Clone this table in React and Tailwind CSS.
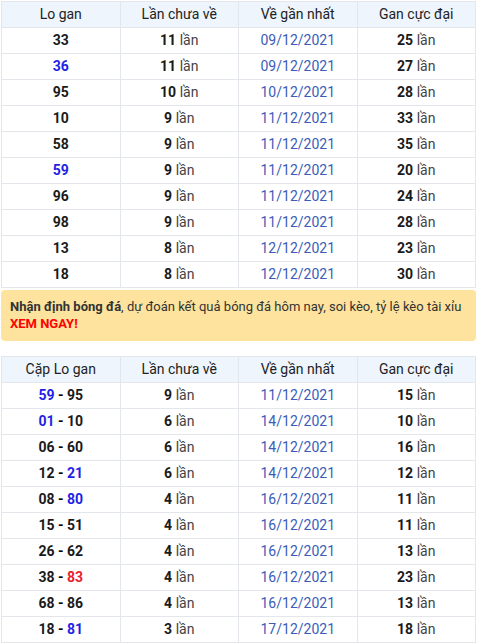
const rows1 = [
  ["33", null, 11, "09/12/2021", 25],
  ["36", "blue", 11, "09/12/2021", 27],
  ["95", null, 10, "10/12/2021", 28],
  ["10", null, 9, "11/12/2021", 33],
  ["58", null, 9, "11/12/2021", 35],
  ["59", "blue", 9, "11/12/2021", 20],
  ["96", null, 9, "11/12/2021", 24],
  ["98", null, 9, "11/12/2021", 28],
  ["13", null, 8, "12/12/2021", 23],
  ["18", null, 8, "12/12/2021", 30],
];

// [left, leftColor, right, rightColor, lan, date, max]
const rows2 = [
  ["59", "blue", "95", null, 9, "11/12/2021", 15],
  ["01", "blue", "10", null, 6, "14/12/2021", 10],
  ["06", null, "60", null, 6, "14/12/2021", 16],
  ["12", null, "21", "blue", 6, "14/12/2021", 12],
  ["08", null, "80", "blue", 4, "16/12/2021", 11],
  ["15", null, "51", null, 4, "16/12/2021", 11],
  ["26", null, "62", null, 4, "16/12/2021", 13],
  ["38", null, "83", "red", 4, "16/12/2021", 23],
  ["68", null, "86", null, 4, "16/12/2021", 13],
  ["18", null, "81", "blue", 3, "17/12/2021", 18],
];

const colorCls = {
  blue: "text-[#1f1fe6]",
  red: "text-[#e8212b]",
};

function Num({ v, c }) {
  return <span className={c ? colorCls[c] : "text-[#1a1a1a]"}>{v}</span>;
}

function Lan({ n }) {
  return (
    <>
      <b className="font-bold text-[#1a1a1a]">{n}</b>{" "}
      <span className="text-[#444]">lần</span>
    </>
  );
}

function Head({ cols }) {
  return (
    <thead>
      <tr className="bg-[#eef5fd]">
        {cols.map((c) => (
          <th key={c} className="h-[26px] p-0 border border-[#e3e6ea] font-normal text-[#222] w-1/4">
            {c}
          </th>
        ))}
      </tr>
    </thead>
  );
}

const td = "h-[26px] p-0 border border-[#e3e6ea] text-center";

export default function App() {
  return (
    <div className="w-[480px] pl-px pt-px text-[14px] bg-white" style={{ fontFamily: "Roboto, 'Liberation Sans', sans-serif" }}>
      <table className="w-[475px] border-collapse table-fixed">
        <Head cols={["Lo gan", "Lần chưa về", "Về gần nhất", "Gan cực đại"]} />
        <tbody>
          {rows1.map(([num, c, lan, date, max]) => (
            <tr key={num + date}>
              <td className={td + " font-bold"}><Num v={num} c={c} /></td>
              <td className={td}><Lan n={lan} /></td>
              <td className={td + " text-[#3b5cb8]"}>{date}</td>
              <td className={td}><Lan n={max} /></td>
            </tr>
          ))}
        </tbody>
      </table>

      {/* banner */}
      <div className="w-[475px] mt-[2px] rounded-[4px] bg-[#fde39d] pl-[9px] pr-[4px] pt-[8px] pb-[9px] text-[13px] leading-[17px] text-[#333]">
        <b className="font-bold">Nhận định bóng đá</b>, dự đoán kết quả bóng đá hôm nay, soi kèo, tỷ lệ kèo tài xỉu{" "}
        <b className="font-bold text-[#f00]">XEM NGAY!</b>
      </div>

      <table className="w-[475px] border-collapse table-fixed mt-[15px]">
        <Head cols={["Cặp Lo gan", "Lần chưa về", "Về gần nhất", "Gan cực đại"]} />
        <tbody>
          {rows2.map(([a, ac, b, bc, lan, date, max]) => (
            <tr key={a + b}>
              <td className={td + " font-bold"}>
                <Num v={a} c={ac} /> - <Num v={b} c={bc} />
              </td>
              <td className={td}><Lan n={lan} /></td>
              <td className={td + " text-[#3b5cb8]"}>{date}</td>
              <td className={td}><Lan n={max} /></td>
            </tr>
          ))}
        </tbody>
      </table>
    </div>
  );
}
